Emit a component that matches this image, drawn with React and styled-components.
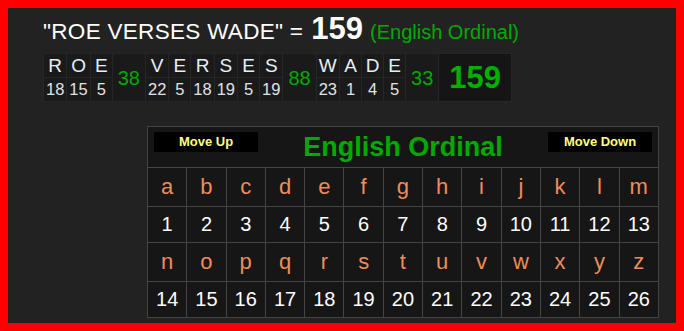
import React from 'react';
import styled, { createGlobalStyle } from 'styled-components';

const phrase = {
  text: 'ROE VERSES WADE',
  total: 159,
  cipher: 'English Ordinal',
  words: [
    { letters: 'ROE', values: [18, 15, 5], sum: 38 },
    { letters: 'VERSES', values: [22, 5, 18, 19, 5, 19], sum: 88 },
    { letters: 'WADE', values: [23, 1, 4, 5], sum: 33 },
  ],
};

const alphabet = 'abcdefghijklmnopqrstuvwxyz'.split('');
const halves = [alphabet.slice(0, 13), alphabet.slice(13)];

const GlobalStyle = createGlobalStyle`
  html, body {
    margin: 0;
    padding: 0;
    background: #222222;
  }
`;

export default function App() {
  return (
    <>
      <GlobalStyle />
      <Frame>
        <Headline>
          <Phrase>"{phrase.text}" =</Phrase>
          <Total>{phrase.total}</Total>
          <CipherName>({phrase.cipher})</CipherName>
        </Headline>

        <Breakdown>
          <tbody>
            <tr>
              {phrase.words.map((w, i) => (
                <React.Fragment key={i}>
                  {w.letters.split('').map((l, j) => (
                    <LetterCell key={j}>{l}</LetterCell>
                  ))}
                  <SumCell rowSpan={2}>{w.sum}</SumCell>
                </React.Fragment>
              ))}
              <TotalCell rowSpan={2}>{phrase.total}</TotalCell>
            </tr>
            <tr>
              {phrase.words.map((w, i) =>
                w.values.map((v, j) => <ValueCell key={i + '-' + j}>{v}</ValueCell>)
              )}
            </tr>
          </tbody>
        </Breakdown>

        <Chart>
          <tbody>
            <tr>
              <HeaderCell colSpan={13}>
                <HeaderBar>
                  <MoveButton>Move Up</MoveButton>
                  <ChartTitle>{phrase.cipher}</ChartTitle>
                  <MoveButton>Move Down</MoveButton>
                </HeaderBar>
              </HeaderCell>
            </tr>
            {halves.map((row, r) => (
              <React.Fragment key={r}>
                <tr>
                  {row.map((l) => (
                    <GridCell key={l} $letter>{l}</GridCell>
                  ))}
                </tr>
                <tr>
                  {row.map((l) => (
                    <GridCell key={l}>{alphabet.indexOf(l) + 1}</GridCell>
                  ))}
                </tr>
              </React.Fragment>
            ))}
          </tbody>
        </Chart>
      </Frame>
    </>
  );
}

const Frame = styled.div`
  box-sizing: border-box;
  width: 684px;
  height: 331px;
  border: 8px solid #ff0000;
  background: #222222;
  padding: 5px 0 0 35px;
  font-family: 'Liberation Sans', Arial, sans-serif;
  overflow: hidden;
`;

const Headline = styled.div`
  display: flex;
  align-items: baseline;
  height: 30px;
  line-height: 1;
  color: #ffffff;
  white-space: pre;
`;

const Phrase = styled.span`
  font-size: 22.5px;
  letter-spacing: 0.3px;
`;

const Total = styled.span`
  font-size: 31px;
  font-weight: 700;
  margin-left: 8px;
`;

const CipherName = styled.span`
  font-size: 20px;
  color: #00aa00;
  margin-left: 7px;
`;

const Breakdown = styled.table`
  margin-top: 10px;
  border-collapse: collapse;
  background: #1a1a1a;
  line-height: 1;
`;

const LetterCell = styled.td`
  height: 23px;
  min-width: 17px;
  padding: 0 2px;
  text-align: center;
  font-size: 19px;
  color: #e6eef7;
  border: 1px solid #262626;
`;

const ValueCell = styled(LetterCell)`
  font-size: 16.5px;
  color: #e2e2e2;
`;

const SumCell = styled.td`
  width: 22px;
  padding: 0 5px;
  text-align: center;
  font-size: 20px;
  color: #00aa00;
  border: 1px solid #262626;
`;

const TotalCell = styled.td`
  width: 50px;
  padding: 0 10px;
  text-align: center;
  font-size: 31px;
  font-weight: 700;
  color: #00b000;
  background: #151515;
  border: 1px solid #262626;
`;

const Chart = styled.table`
  margin: 24px 0 0 104px;
  width: 512px;
  border-collapse: collapse;
  background: #161616;
  border: 1px solid #444444;
`;

const HeaderCell = styled.td`
  height: 40px;
  padding: 0;
  border: 1px solid #444444;
  vertical-align: top;
`;

const HeaderBar = styled.div`
  display: flex;
  justify-content: space-between;
  align-items: flex-start;
  padding: 5px 6px 0;
`;

const MoveButton = styled.div`
  width: 104px;
  height: 20px;
  background: #000000;
  color: #ffff88;
  font-size: 13px;
  font-weight: 700;
  line-height: 20px;
  text-align: center;
`;

const ChartTitle = styled.div`
  margin-top: 2px;
  font-size: 27px;
  font-weight: 700;
  line-height: 1;
  color: #00aa00;
`;

const GridCell = styled.td`
  width: 38px;
  height: ${(p) => (p.$letter ? '38px' : '35px')};
  padding: 0;
  text-align: center;
  vertical-align: middle;
  font-size: ${(p) => (p.$letter ? '22px' : '20px')};
  color: ${(p) => (p.$letter ? '#f08c58' : '#ffffff')};
  border: 1px solid #444444;
`;
